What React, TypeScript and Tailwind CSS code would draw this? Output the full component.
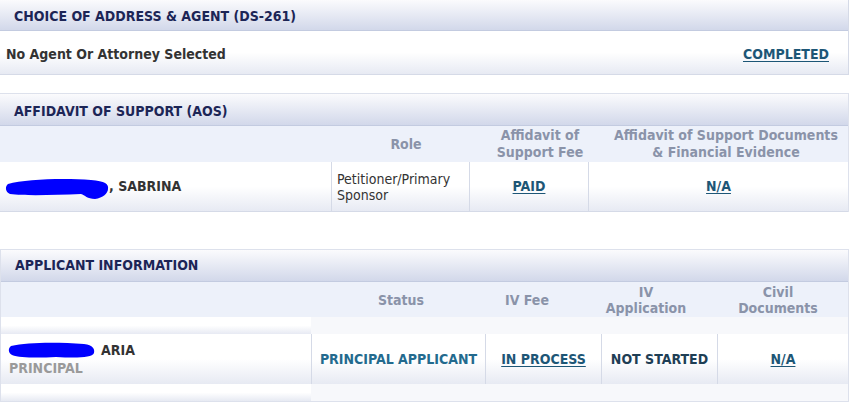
import React from "react";

const font = { fontFamily: '"DejaVu Sans Condensed", "DejaVu Sans", Verdana, sans-serif' };

function Blob({ w, tail }: { w: number; tail?: boolean }) {
  return (
    <svg width={w} height={tail ? 22 : 18} viewBox={`0 0 ${w} ${tail ? 22 : 18}`} className="shrink-0">
      {tail ? (
        <path
          d={`M3 6 C20 1 60 0 ${w - 20} 2 C${w - 6} 3 ${w - 2} 6 ${w - 3} 11 C${w - 3} 15 ${w - 8} 20 ${w - 16} 21 C${w - 24} 21 ${w - 26} 17 ${w - 30} 16 C50 17 20 18 5 16 C0 14 0 8 3 6 Z`}
          fill="#0000ff"
        />
      ) : (
        <path
          d={`M3 5 C20 1 50 1 ${w - 12} 3 C${w - 3} 4 ${w - 1} 8 ${w - 2} 12 C${w - 4} 17 ${w - 20} 17 ${w - 40} 16 C30 17 12 17 4 14 C0 12 0 7 3 5 Z`}
          fill="#0000ff"
        />
      )}
    </svg>
  );
}

function SectionHeader({ title, pad }: { title: string; pad?: string }) {
  return (
    <div className={`h-[32px] flex items-center px-[14px] ${pad ?? ""} bg-linear-to-b from-[#fbfbfd] to-[#d2d8ea] border-b border-[#c3cbe0] text-[14px] font-bold text-[#1c2556]`}>
      {title}
    </div>
  );
}

const link = "underline underline-offset-2 text-[#1d5676] font-bold text-[14px]";
const cellGrad = "bg-linear-to-b from-white via-white to-[#e7eaf3]";

export default function App() {
  return (
    <div style={font} className="w-[851px] h-[402px] bg-white overflow-hidden">
      {/* Choice of address & agent */}
      <div className="w-[849px] border-r border-[#d5dae7]">
        <div className="h-[31px] flex items-center px-[14px] pt-[2px] bg-linear-to-b from-[#fbfbfd] to-[#d2d8ea] border-b border-[#c3cbe0] text-[14px] font-bold text-[#1c2556]">
          CHOICE OF ADDRESS &amp; AGENT (DS-261)
        </div>
        <div className={`h-[44px] flex items-center justify-between pl-[6px] pr-[19px] pt-[3px] border-b border-[#d5dae7] ${cellGrad}`}>
          <span className="text-[14px] font-bold text-[#333]">No Agent Or Attorney Selected</span>
          <a className={link}>COMPLETED</a>
        </div>
      </div>

      {/* Affidavit of support */}
      <div className="mt-[18px] w-[849px] border-t border-r border-[#dde1ec]">
        <SectionHeader title="AFFIDAVIT OF SUPPORT (AOS)" pad="pt-[3px]" />
        <div className="h-[36px] grid grid-cols-[338px_136px_132px_240px] bg-[#edf1fa] text-[14px] font-bold text-[#8a93a9] leading-[17px] text-center items-center">
          <div />
          <div>Role</div>
          <div>
            Affidavit of
            <br />
            Support Fee
          </div>
          <div>
            Affidavit of Support Documents
            <br />
            &amp; Financial Evidence
          </div>
        </div>
        <div className={`h-[50px] grid grid-cols-[331px_138px_119px_260px] border-b border-[#d5dae7] ${cellGrad}`}>
          <div className="flex items-center pl-[5px] pt-[4px] text-[14px] font-bold text-[#333]">
            <Blob w={106} tail />
            <span className="ml-[-2px] -mt-[4px]">, SABRINA</span>
          </div>
          <div className="flex items-center border-l border-[#d5dae7] pl-[5px] text-[14px] leading-[16px] text-[#333]">
            Petitioner/Primary
            <br />
            Sponsor
          </div>
          <div className="flex items-center justify-center border-l border-[#d5dae7]">
            <a className={link}>PAID</a>
          </div>
          <div className="flex items-center justify-center border-l border-[#d5dae7]">
            <a className={link}>N/A</a>
          </div>
        </div>
      </div>

      {/* Applicant information */}
      <div className="mt-[37px] w-[849px] border-t border-l border-r border-[#dde1ec]">
        <SectionHeader title="APPLICANT INFORMATION" />
        <div className="h-[35px] grid grid-cols-[329px_142px_110px_128px_136px] bg-[#edf1fa] text-[14px] font-bold text-[#8a93a9] leading-[16px] text-center items-center">
          <div />
          <div>Status</div>
          <div>IV Fee</div>
          <div>
            IV
            <br />
            Application
          </div>
          <div>
            Civil
            <br />
            Documents
          </div>
        </div>
        <div className="h-[17px] flex bg-[#f7f8fb]">
          <div className={`w-[310px] ${cellGrad}`} />
        </div>
        <div className={`h-[50px] grid grid-cols-[310px_174px_116px_116px_131px] ${cellGrad}`}>
          <div className="flex flex-col justify-center pl-[7px] -mt-[4px]">
            <div className="flex items-center text-[14px] font-bold text-[#333]">
              <Blob w={88} />
              <span className="ml-[5px]">ARIA</span>
            </div>
            <div className="pl-[1px] text-[14px] font-bold text-[#9a9a9a] leading-[14px]">PRINCIPAL</div>
          </div>
          <div className="flex items-center justify-center border-l border-[#d5dae7] text-[14px] font-bold text-[#236a8e]">
            PRINCIPAL APPLICANT
          </div>
          <div className="flex items-center justify-center border-l border-[#d5dae7]">
            <a className={link}>IN PROCESS</a>
          </div>
          <div className="flex items-center justify-center border-l border-[#d5dae7] text-[14px] font-bold text-[#1e3e55]">
            NOT STARTED
          </div>
          <div className="flex items-center justify-center border-l border-[#d5dae7]">
            <a className={link}>N/A</a>
          </div>
        </div>
        <div className="h-[18px] flex bg-[#f7f8fb] border-b border-[#dde1ec]">
          <div className={`w-[310px] ${cellGrad}`} />
        </div>
      </div>
    </div>
  );
}
